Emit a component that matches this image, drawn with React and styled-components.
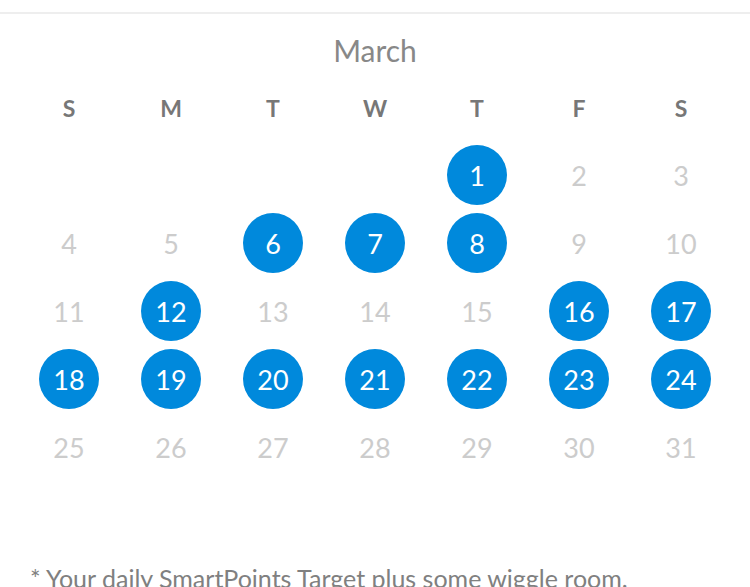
import React from "react";
import styled, { createGlobalStyle } from "styled-components";

const GlobalStyle = createGlobalStyle`
  body {
    margin: 0;
    background: #fff;
    font-family: Lato, "Open Sans", sans-serif;
  }
`;

const WEEKDAYS = ["S", "M", "T", "W", "T", "F", "S"];
const FIRST_WEEKDAY = 4; // March 1st is a Thursday
const DAYS_IN_MONTH = 31;
const HIT_DAYS = [1, 6, 7, 8, 12, 16, 17, 18, 19, 20, 21, 22, 23, 24];

const Wrapper = styled.main`
  margin-top: 12px;
  border-top: 2px solid #eeeeee;
  padding: 0 18px;
`;

const Title = styled.h2`
  margin: 18px 0 0;
  text-align: center;
  font-size: 30px;
  line-height: 36px;
  font-weight: 400;
  color: #888;
`;

const Grid = styled.div`
  display: grid;
  grid-template-columns: repeat(7, 1fr);
`;

const Weekdays = styled(Grid)`
  margin-top: 26px;
`;

const Weekday = styled.span`
  text-align: center;
  font-size: 23px;
  line-height: 28px;
  font-weight: 700;
  color: #777;
`;

const Days = styled(Grid)`
  margin-top: 19px;
  grid-auto-rows: 68px;
`;

const Cell = styled.div`
  display: flex;
  align-items: center;
  justify-content: center;
`;

const Day = styled.span`
  width: 60px;
  height: 60px;
  border-radius: 50%;
  display: flex;
  align-items: center;
  justify-content: center;
  font-size: 27px;
  background: ${({ $hit }) => ($hit ? "#0089dc" : "transparent")};
  color: ${({ $hit }) => ($hit ? "#fff" : "#cccccc")};
`;

const Note = styled.p`
  margin: 82px 0 0;
  padding-left: 12px;
  font-size: 25px;
  line-height: 30px;
  color: #808080;
  white-space: nowrap;
`;

const App = () => {
  const cells = [];
  for (let i = 0; i < FIRST_WEEKDAY; i++) {
    cells.push(<Cell key={`blank-${i}`} />);
  }
  for (let d = 1; d <= DAYS_IN_MONTH; d++) {
    cells.push(
      <Cell key={d}>
        <Day $hit={HIT_DAYS.includes(d)}>{d}</Day>
      </Cell>
    );
  }

  return (
    <>
      <GlobalStyle />
      <Wrapper>
        <Title>March</Title>
        <Weekdays>
          {WEEKDAYS.map((w, i) => (
            <Weekday key={i}>{w}</Weekday>
          ))}
        </Weekdays>
        <Days>{cells}</Days>
        <Note>* Your daily SmartPoints Target plus some wiggle room.</Note>
      </Wrapper>
    </>
  );
};

export default App;
